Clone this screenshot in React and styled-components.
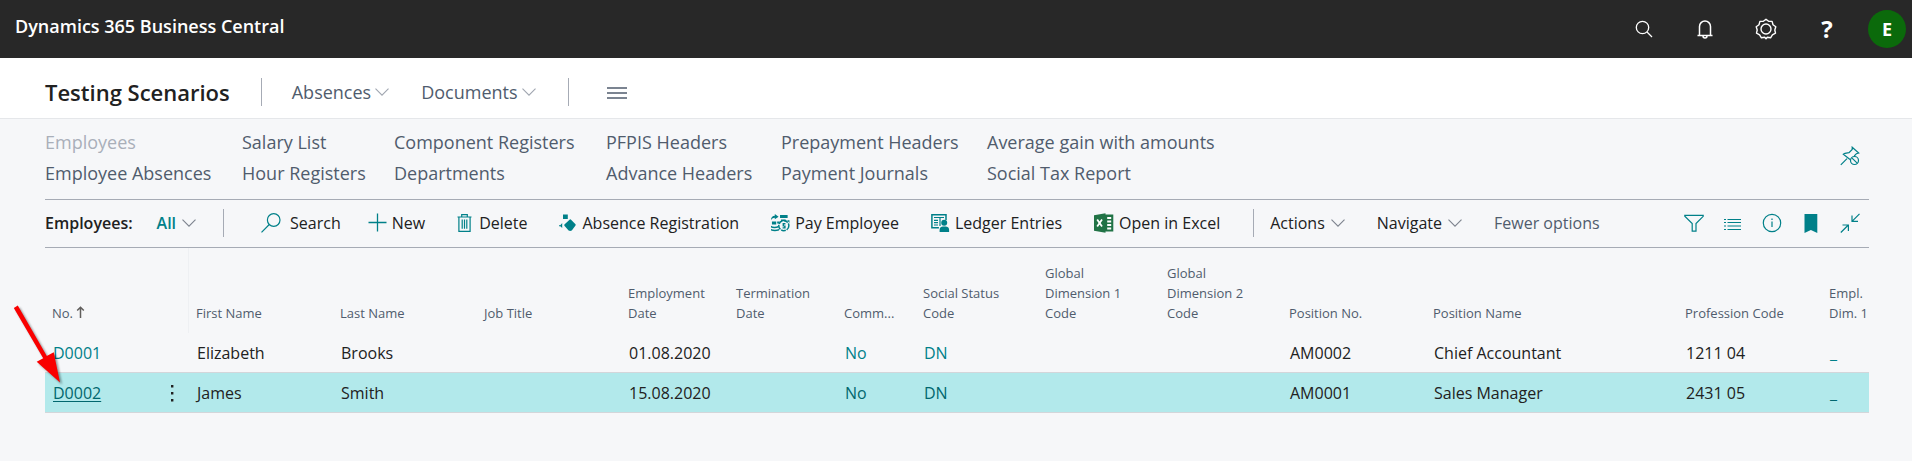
import React from "react";
import styled, { createGlobalStyle, css } from "styled-components";

const teal = "#008089";
const slate = "#505c6d";
const ink = "#212121";
const rule = "#a6abb5";

const GlobalStyle = createGlobalStyle`
  *, *::before, *::after { box-sizing: border-box; }
  body {
    margin: 0;
    background: #f6f7f9;
    color: ${ink};
    font-family: "Open Sans", "Noto Sans", sans-serif;
    font-size: 16px;
    line-height: 24px;
  }
`;

const buttonReset = css`
  margin: 0;
  padding: 0;
  border: 0;
  background: none;
  font-family: inherit;
  font-size: inherit;
  line-height: inherit;
  color: inherit;
  cursor: pointer;
  white-space: nowrap;
`;

const TopBar = styled.header`
  display: flex;
  align-items: center;
  height: 58px;
  padding: 0 6px 0 15px;
  background: #282828;
  color: #fff;
`;

const Product = styled.span`
  flex: 1;
  font-size: 18px;
  font-weight: 600;
  padding-bottom: 6px;
`;

const TopActions = styled.div`
  display: flex;
  align-items: center;
  gap: 21px;
`;

const TopButton = styled.button`
  ${buttonReset}
  display: flex;
  align-items: center;
  justify-content: center;
  width: 40px;
  height: 40px;
  font-size: 24px;
  font-weight: 700;
`;

const Avatar = styled.button`
  ${buttonReset}
  width: 38px;
  height: 38px;
  border-radius: 50%;
  background: #0b6a0b;
  font-size: 18px;
  font-weight: 700;
`;

const RoleBar = styled.div`
  display: flex;
  align-items: center;
  height: 61px;
  padding: 8px 45px 0;
  background: #fff;
  border-bottom: 1px solid #e5e7ea;
`;

const RoleTitle = styled.h1`
  margin: 0;
  font-size: 22px;
  font-weight: 600;
  white-space: nowrap;
`;

const Divider = styled.span`
  flex: none;
  width: 1px;
  height: 28px;
  background: ${rule};
`;

const MenuGroup = styled.nav`
  display: flex;
  gap: 32px;
  padding: 0 32px 0 30px;
  font-size: 18px;
  color: ${slate};
`;

const RoleBarDivider = styled(Divider)`
  margin-left: 31px;
`;

const MenuButton = styled.button`
  ${buttonReset}
  display: flex;
  align-items: center;
  gap: ${(p) => p.$gap || 4}px;
`;

const Hamburger = styled.button`
  ${buttonReset}
  display: flex;
  margin-left: 38px;
  color: ${slate};
`;

const Main = styled.main`
  padding: 0 43px 0 45px;
`;

const LinkBar = styled.div`
  display: flex;
  align-items: center;
  justify-content: space-between;
  height: 80px;
  padding: 0 9px 6px 0;
`;

const LinkGrid = styled.nav`
  display: grid;
  grid-template-columns: 197px 152px 212px 175px 206px auto;
  padding-top: 4px;
  font-size: 18px;
  line-height: 31px;
`;

const NavLink = styled.a`
  color: ${(p) => (p.$current ? "#a9afb9" : slate)};
  text-decoration: none;
  white-space: nowrap;
`;

const IconButton = styled.button`
  ${buttonReset}
  display: flex;
  color: ${teal};
`;

const ActionBar = styled.div`
  display: flex;
  align-items: center;
  height: 49px;
  padding-bottom: 1px;
  border-top: 1px solid ${rule};
  border-bottom: 1px solid ${rule};
`;

const PageName = styled.span`
  font-weight: 600;
  margin-right: 24px;
`;

const ViewButton = styled(MenuButton)`
  margin-right: 27px;
  color: ${teal};
  font-weight: 600;
`;

const SearchArea = styled.div`
  padding: 0 27px 0 37px;
`;

const Actions = styled.div`
  display: flex;
  gap: 32px;
  padding-right: 33px;
`;

const Action = styled.button`
  ${buttonReset}
  display: flex;
  align-items: center;
  gap: 5px;
  color: ${ink};
  & > svg { color: ${teal}; }
`;

const Menus = styled.div`
  display: flex;
  flex: 1;
  gap: 32px;
  padding-left: 16px;
`;

const FewerOptions = styled.button`
  ${buttonReset}
  color: ${slate};
`;

const ListTools = styled.div`
  display: flex;
  align-items: center;
  gap: 19px;
  padding-right: 9px;
`;

const TableClip = styled.div`
  overflow: hidden;
`;

const Table = styled.table`
  width: 100%;
  table-layout: fixed;
  border-collapse: separate;
  border-spacing: 0;
`;

const Col = styled.col`
  width: ${(p) => (p.$w ? `${p.$w}px` : "auto")};
`;

const HeadCell = styled.th`
  height: 85px;
  padding: 0 0 10px 7px;
  vertical-align: bottom;
  text-align: left;
  font-size: 13px;
  font-weight: 400;
  line-height: 20px;
  color: ${slate};
  white-space: pre;
  border-right: ${(p) => (p.$pinned ? "1px solid #eef0f3" : "0")};
`;

const Row = styled.tr`
  background: ${(p) => (p.$selected ? "#b2e9eb" : "transparent")};
`;

const Cell = styled.td`
  height: 40px;
  padding: 0 0 0 8px;
  border-bottom: 1px solid #d3d6da;
  white-space: nowrap;
`;

const RecordCell = styled.div`
  display: flex;
  align-items: center;
  justify-content: space-between;
  padding-right: 12px;
`;

const CellLink = styled.a`
  color: ${(p) => (p.$dark ? "#00676e" : teal)};
  text-decoration: ${(p) => (p.$underlined ? "underline" : "none")};
  text-underline-offset: 2px;
`;

const Pointer = styled.svg`
  position: absolute;
  left: 10px;
  top: 300px;
  pointer-events: none;
  filter: drop-shadow(2px 2px 1px rgba(0, 0, 0, 0.4));
`;

const Chevron = ({ color = "#7d838e" }) => (
  <svg width="14" height="8" viewBox="0 0 14 8" fill="none" stroke={color} strokeWidth="1.1" aria-hidden="true">
    <path d="M.5 .7 7 7.2 13.5 .7" />
  </svg>
);

const Icon = ({ w = 20, h = 20, sw = 1.2, children }) => (
  <svg width={w} height={h} viewBox={`0 0 ${w} ${h}`} fill="none" stroke="currentColor" strokeWidth={sw} aria-hidden="true">
    {children}
  </svg>
);

const icons = {
  topSearch: (
    <Icon w={18} h={18} sw={1.3}>
      <circle cx="7.5" cy="7.5" r="6.2" />
      <path d="m12 12 5 5" />
    </Icon>
  ),
  bell: (
    <Icon w={18} h={20} sw={1.5}>
      <path d="M1.5 16.5h15M3.5 16.5V7.5a5.5 5.5 0 0 1 11 0V16.5M7 17a2 2 0 0 0 4 0" />
    </Icon>
  ),
  gear: (
    <Icon w={22} h={22} sw={1.4}>
      <circle cx="11" cy="11" r="5" />
      <path d="M11 1.2 13.6 3.2 17.1 3.4 18 6.8 20.8 8.8 19.8 12 20.5 15.2 17.4 16.9 15.6 19.8 12.3 19.3 11 20.8 9.7 19.3 6.4 19.8 4.6 16.9 1.5 15.2 2.2 12 1.2 8.8 4 6.8 4.9 3.4 8.4 3.2Z" strokeLinejoin="round" />
    </Icon>
  ),
  search: (
    <Icon w={24} h={20}>
      <circle cx="12.7" cy="7" r="6.3" />
      <path d="M8.3 11.5.5 19.3" />
    </Icon>
  ),
  plus: (
    <Icon w={19} h={20} sw={1.3}>
      <path d="M.5 9.5h18M9.5 .5v18" />
    </Icon>
  ),
  trash: (
    <Icon w={17} h={20} sw={1.2}>
      <path d="M.5 4h14M4.7 3.8V1.6h5.6v2.2M1.9 4v14.3h11.2V4M5.2 6.5v9.3M7.5 6.5v9.3M9.8 6.5v9.3" />
    </Icon>
  ),
  absence: (
    <svg width="18" height="18" viewBox="0 0 18 18" fill="currentColor" aria-hidden="true">
      <path d="M4 .5h4.8V5H4zM10.8 5.5q.5-.3 1 0l4.7 4.7q.4.6 0 1.2l-3.7 5.2q-1.6.8-3.2 0L5.4 11.8q-.3-.6 0-1.2z" />
      <path d="M0 11.2h1.3l1.9-2.3v5.2l-1.9-1.8H0z" />
    </svg>
  ),
  pay: (
    <svg width="19" height="20" viewBox="0 0 20 20" fill="currentColor" aria-hidden="true">
      <path d="M0 7c0-3.2 1.5-4.6 4-4.7V.5L8 3.3 4 6V4.4C2.4 4.4 1.2 5.2 0 7zM9.5 1.5h8v3.3h-8zM1 8.5h4.5v3H1zM0 13c2 1.2 5 1.2 8 0v1.7c-3 1-6 1-8 0zM0 16.3c2.5 1 5.5 1 8.5 0V18c-3 1-6 1-8.5 0z" />
      <circle cx="13.5" cy="12.8" r="5.3" fill="none" stroke="currentColor" strokeWidth="1.6" strokeDasharray="5 1" />
      <path d="M10.5 6.3h5v1.6h-5zM6.5 8.5h2.500v2H6.5zM17 7h2.4v3zM12.2 10h3v1.5h-1.5v1h1.7v3.2h-3.2v-1.3h1.6v-.8h-1.6z" />
    </svg>
  ),
  ledger: (
    <svg width="19" height="20" viewBox="0 0 19 20" aria-hidden="true">
      <path d="M15 7V1.7H.9v13.1h7" fill="none" stroke="currentColor" strokeWidth="1.5" />
      <path d="M3 4.5h10M3 7.3h4M3 9.7h4M3 12h4M9 5v8" fill="none" stroke="currentColor" strokeWidth="1.2" />
      <circle cx="13.2" cy="9.8" r="3" fill="currentColor" />
      <path d="M8.6 19v-2.3c0-2.2 1.7-3 3.3-3.2h2.8c1.7.2 3.4 1 3.4 3.2V19z" fill="currentColor" />
    </svg>
  ),
  excel: (
    <svg width="20" height="20" viewBox="0 0 20 20" aria-hidden="true">
      <path d="M10 1.5h9.3v17H10z" fill="#217346" />
      <path d="M13.2 4h4v2h-4zM13.2 7.5h4v2h-4zM13.2 11h4v2h-4zM13.2 14.5h4v2h-4z" fill="#fff" />
      <path d="M0 2.2 11.5.3v19.4L0 17.8z" fill="#217346" />
      <path d="m3.2 6.5 4.8 7M8 6.5l-4.8 7" stroke="#fff" strokeWidth="1.8" />
    </svg>
  ),
  filter: (
    <Icon>
      <path d="M.8 2.3h18.4v1L12 10.5v7.7H8.2v-7.7L.8 3.3z" />
    </Icon>
  ),
  list: (
    <Icon>
      <path d="M1 6.500h2M4.5 6.500h13.5M1 9.5h2M4.5 9.5h13.5M1 13h2M4.5 13h13.5M1 16.5h2M4.5 16.5h13.5" />
    </Icon>
  ),
  info: (
    <Icon>
      <circle cx="10" cy="10" r="8.7" />
      <path d="M10 8.5V14M10 5.6v1.5" />
    </Icon>
  ),
  bookmark: (
    <svg width="20" height="20" viewBox="0 0 20 20" fill="currentColor" aria-hidden="true">
      <path d="M3.5 1h12.8v19l-6.4-3-6.4 3z" />
    </svg>
  ),
  collapse: (
    <Icon>
      <path d="M19.5 .8 12 8.3M12 2.5v5.9h6M.8 19.5 8.3 12M2.5 12h5.9v6" />
    </Icon>
  ),
  pin: (
    <Icon>
      <path d="M.8 18.8 7 12.6M10 13.5 3.3 8.2C5 6.7 7.5 7 9 6.7L12.2 3.5V1.2L18.7 7l-2.3.7-2.2 2.3" />
      <circle cx="14.5" cy="14.5" r="4" />
      <path d="m11.8 11.8 5.4 5.4" />
    </Icon>
  ),
};

const links = [
  "Employees", "Salary List", "Component Registers", "PFPIS Headers", "Prepayment Headers", "Average gain with amounts",
  "Employee Absences", "Hour Registers", "Departments", "Advance Headers", "Payment Journals", "Social Tax Report",
];

const actions = [
  ["New", "plus"],
  ["Delete", "trash"],
  ["Absence Registration", "absence"],
  ["Pay Employee", "pay"],
  ["Ledger Entries", "ledger"],
  ["Open in Excel", "excel"],
];

const tools = [
  ["Filter", "filter"],
  ["Show as list", "list"],
  ["Details", "info"],
  ["Bookmark", "bookmark"],
  ["Collapse", "collapse"],
];

const columns = [
  ["No.", 144],
  ["First Name", 144],
  ["Last Name", 144],
  ["Job Title", 144],
  ["Employment\nDate", 108],
  ["Termination\nDate", 108],
  ["Comm...", 79],
  ["Social Status\nCode", 122],
  ["Global\nDimension 1\nCode", 122],
  ["Global\nDimension 2\nCode", 122],
  ["Position No.", 144],
  ["Position Name", 252],
  ["Profession Code", 144],
  ["Empl.\nDim. 1", 0],
];

const rows = [
  ["D0001", "Elizabeth", "Brooks", "", "01.08.2020", "", "No", "DN", "", "", "AM0002", "Chief Accountant", "1211 04", "_"],
  ["D0002", "James", "Smith", "", "15.08.2020", "", "No", "DN", "", "", "AM0001", "Sales Manager", "2431 05", "_"],
];

const linkedColumns = [6, 7, 13];

const SortArrow = () => (
  <svg width="9" height="12" viewBox="0 0 9 12" fill="none" stroke="#605e5c" strokeWidth="1.5" aria-hidden="true">
    <path d="M4.5 12V1.5M1.2 4.5 4.5 1.2 7.8 4.5" />
  </svg>
);

const MoreButton = () => (
  <IconButton aria-label="More options">
    <svg width="10" height="18" viewBox="0 0 10 18" fill={ink} aria-hidden="true">
      <path d="M4 1h2.4v2.4H4zM4 8h2.4v2.4H4zM4 15h2.4v2.4H4z" />
    </svg>
  </IconButton>
);

export default function App() {
  return (
    <>
      <GlobalStyle />
      <TopBar>
        <Product>Dynamics 365 Business Central</Product>
        <TopActions>
          <TopButton aria-label="Search">{icons.topSearch}</TopButton>
          <TopButton aria-label="Notifications">{icons.bell}</TopButton>
          <TopButton aria-label="Settings">{icons.gear}</TopButton>
          <TopButton aria-label="Help">?</TopButton>
          <Avatar aria-label="Account">E</Avatar>
        </TopActions>
      </TopBar>
      <RoleBar>
        <RoleTitle>Testing Scenarios</RoleTitle>
        <RoleBarDivider />
        <MenuGroup>
          <MenuButton>Absences<Chevron color="#a0a6b0" /></MenuButton>
          <MenuButton>Documents<Chevron color="#a0a6b0" /></MenuButton>
        </MenuGroup>
        <Divider />
        <Hamburger aria-label="All menus">
          <Icon w={20} h={14} sw={1.3}><path d="M0 3h20M0 8h20M0 13h20" /></Icon>
        </Hamburger>
      </RoleBar>
      <Main>
        <LinkBar>
          <LinkGrid>
            {links.map((label, i) => (
              <NavLink key={label} href="#" $current={i === 0}>{label}</NavLink>
            ))}
          </LinkGrid>
          <IconButton aria-label="Unpin">{icons.pin}</IconButton>
        </LinkBar>
        <ActionBar>
          <PageName>Employees:</PageName>
          <ViewButton $gap={6}>All<Chevron /></ViewButton>
          <Divider />
          <SearchArea>
            <Action>{icons.search}Search</Action>
          </SearchArea>
          <Actions>
            {actions.map(([label, icon]) => (
              <Action key={label}>{icons[icon]}{label}</Action>
            ))}
          </Actions>
          <Divider />
          <Menus>
            <MenuButton $gap={6}>Actions<Chevron /></MenuButton>
            <MenuButton $gap={6}>Navigate<Chevron /></MenuButton>
            <FewerOptions>Fewer options</FewerOptions>
          </Menus>
          <ListTools>
            {tools.map(([label, icon]) => (
              <IconButton key={label} aria-label={label}>{icons[icon]}</IconButton>
            ))}
          </ListTools>
        </ActionBar>
        <TableClip>
          <Table>
            <colgroup>
              {columns.map(([label, w]) => <Col key={label} $w={w} />)}
            </colgroup>
            <thead>
              <tr>
                {columns.map(([label], i) => (
                  <HeadCell key={label} scope="col" $pinned={i === 0}>
                    {label}{i === 0 && <> <SortArrow /></>}
                  </HeadCell>
                ))}
              </tr>
            </thead>
            <tbody>
              {rows.map((row, r) => (
                <Row key={row[0]} $selected={r === 1}>
                  {row.map((value, i) => (
                    <Cell key={i}>
                      {i === 0 ? (
                        <RecordCell>
                          <CellLink href="#" $dark={r === 1} $underlined={r === 1}>{value}</CellLink>
                          {r === 1 && <MoreButton />}
                        </RecordCell>
                      ) : linkedColumns.includes(i) ? (
                        <CellLink href="#" $dark={r === 1}>{value}</CellLink>
                      ) : value}
                    </Cell>
                  ))}
                </Row>
              ))}
            </tbody>
          </Table>
        </TableClip>
      </Main>
      <Pointer width="60" height="90" viewBox="10 300 60 90" aria-hidden="true">
        <path d="M17.8 305.5 46.8 356 53.7 352.3 60 382.5 36.7 361.7 43.2 358.2 13.8 308z" fill="#f90000" />
      </Pointer>
    </>
  );
}
